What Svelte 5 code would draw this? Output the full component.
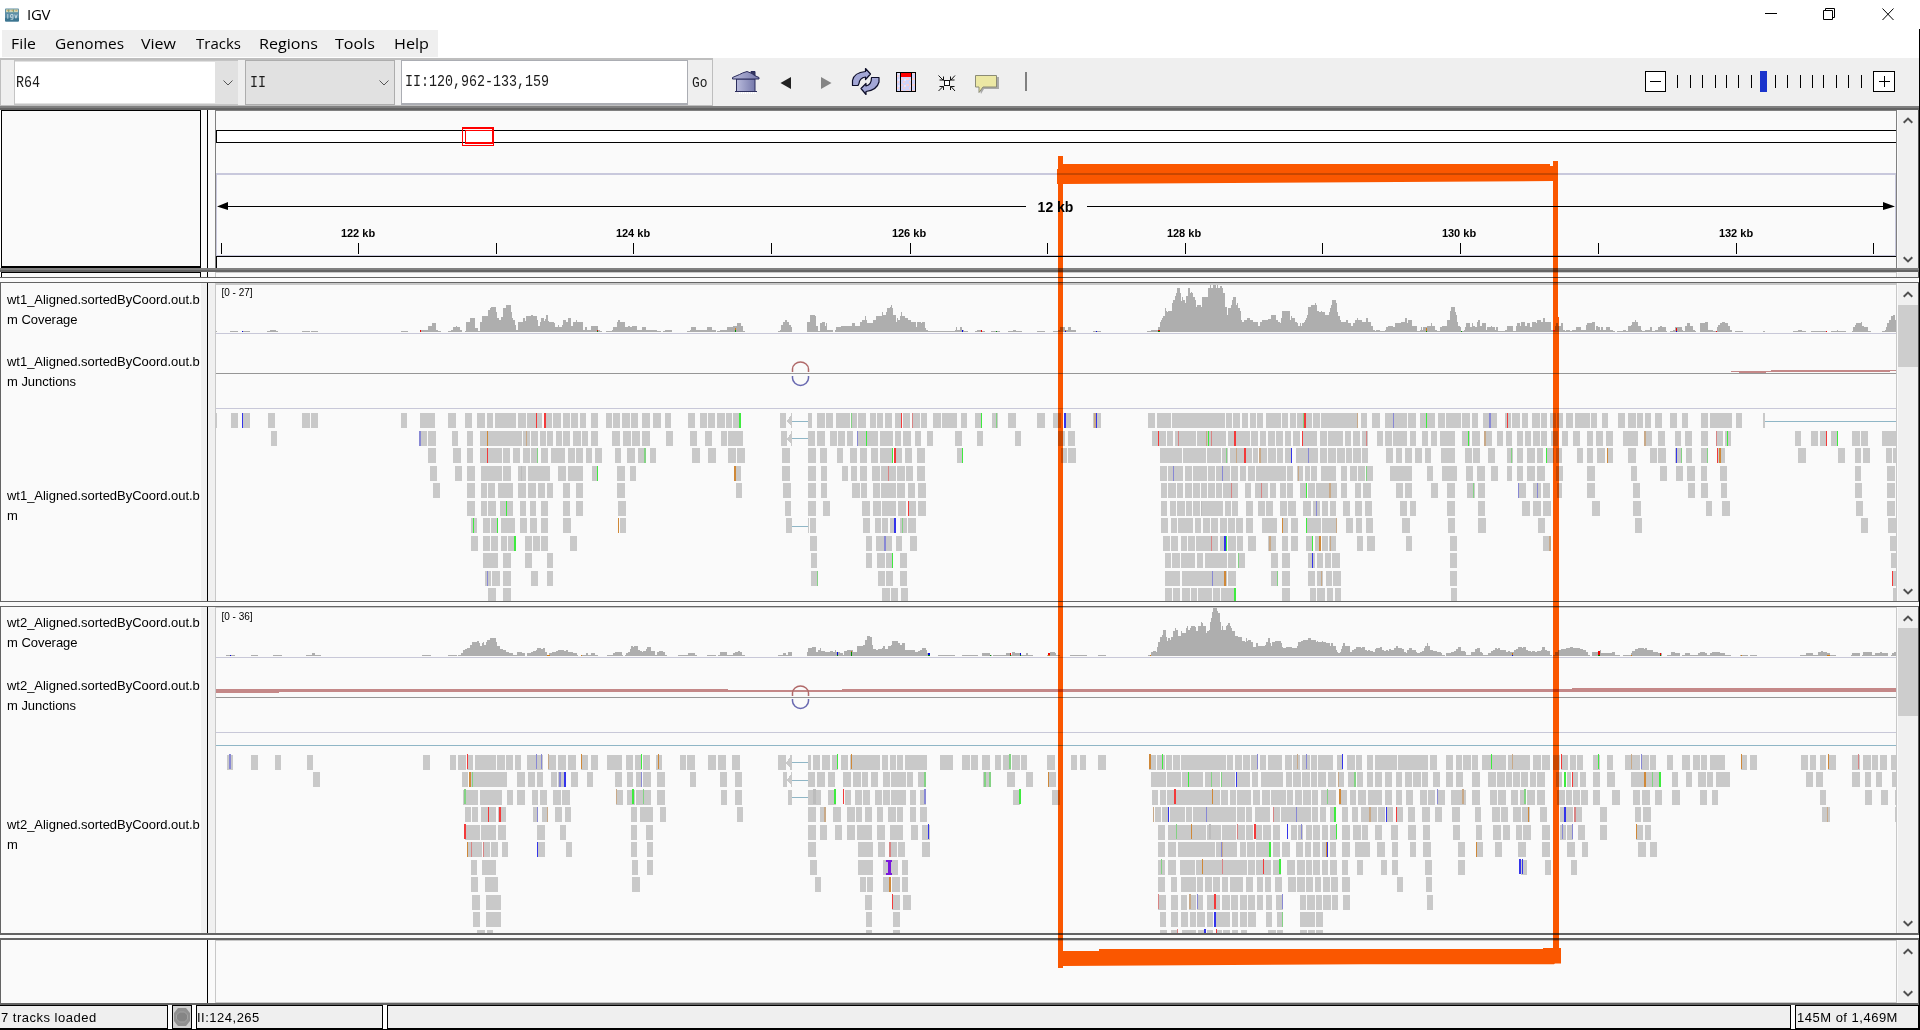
<script>
  // Every chunk of a track lists its spans in its own bins: origin is the chunk's
  // left edge on the panel, scale the number of bins per pixel.
  const CHUNKS = [
    { origin: 0, scale: 2.45 },
    { origin: 600, scale: 2.8 },
    { origin: 1130, scale: 3 },
    { origin: 1500, scale: 3 }
  ];

  const COLOURS = {
    '': '#c9c9c9', k: '#bcbcbc', r: '#f23a3a', R: '#d88484', g: '#3fea3f', G: '#84d284',
    b: '#3434ea', B: '#8888d4', o: '#cf8838', O: '#c8a988', u: '#7a18dc', n: '#0a900a'
  };

  const wt1Reads = [
    `529-532 566-583 595-612 593-595b 657-674 740-759 762-779 982-997 1029-1066 1098-1117 1139-1156 1169-1188 1193-1208 1213-1264 1269-1289 1291-1328 1313-1316r 1338-1352 1333-1338r 1355-1374 1379-1396 1399-1416 1421-1436 1448-1465
664-679 1030-1046 1027-1031B 1049-1068 1107-1122 1144-1159 1176-1279 1193-1196o 1281-1298 1289-1291O 1301-1318 1323-1338 1340-1355 1362-1377 1379-1396 1404-1423 1426-1441 1448-1465
1049-1068 1110-1129 1144-1159 1176-1230 1193-1196r 1232-1249 1257-1274 1281-1298 1301-1318 1316-1318G 1325-1343 1350-1384 1392-1409 1411-1428 1436-1450 1458-1475
1053-1071 1115-1132 1144-1164 1178-1230 1232-1252 1269-1289 1277-1279k 1294-1347 1367-1387 1392-1428 1450-1465 1463-1465g
1061-1078 1144-1164 1178-1193 1196-1213 1220-1257 1269-1289 1294-1313 1318-1335 1340-1355 1379-1396 1411-1428
1144-1164 1178-1193 1196-1215 1225-1257 1240-1242g 1274-1289 1298-1313 1325-1343 1379-1396 1411-1428
1154-1169 1159-1161g 1183-1200 1203-1220 1218-1220g 1227-1262 1274-1291 1298-1316 1325-1343 1379-1399
1154-1171 1183-1200 1203-1220 1227-1242 1245-1260 1259-1264g 1286-1303 1306-1323 1325-1343 1396-1414
1183-1220 1232-1252 1286-1303 1340-1355
1188-1203 1193-1196B 1205-1225 1232-1252 1301-1318 1340-1355
1196-1215 1232-1252`,
    `17-34 36-56 62-84 87-106 118-140 148-171 182-199 246-266 280-300 302-322 328-350 353-370 372-390 389-395g 504-521 523-538< 582-594 608-630 633-652 661-700 703-706G 706-720 722-745 756-773 776-792 798-818 826-846 843-846r 848-868 874-876R 876-896 899-916 932-955 957-1000 1011-1028 1050-1070 1067-1070g 1098-1114 1109-1112G 1142-1165 1224-1246 1268-1290 1303-1319 1299-1305b 1380-1403 1383-1388O 1389-1392b
34-56 64-87 90-112 118-140 185-204 252-272 294-314 339-356 358-400 507-524 524-538< 582-602 608-630 644-664 666-686 692-708 720-722B 722-778 745-748g 784-820 826-843 848-871 882-899 916-932 994-1014 1056-1072 1162-1179 1282-1302 1310-1330
0-6 42-59 76-98 106-129 123-129G 140-157 258-280 302-325 358-381 384-406 510-532 582-605 616-636 664-680 700-720 728-748 759-778 784-820 818-820g 829-846 823-829r 854-874 888-910 1000-1016 1014-1016g 1291-1308 1310-1333
48-70 84-101 381-395 375-381o 510-532 582-605 619-636 678-694 703-720 728-748 762-784 787-829 806-809R 832-854 857-876 888-910
48-70 381-398 512-535 582-605 619-636 706-728 731-748 764-784 787-829 832-854 862-882 890-913
50-73 518-535 582-605 624-644 734-756 764-787 790-829 834-857 862-885 862-865r 890-913
50-53o 56-73 521-538 582-585 587-605 736-756 770-787 790-806 812-823 823-829b 840-860 846-848G 862-885
588-608 745-762 773-818 795-801B 829-846 868-888
591-608 745-762 776-798 801-820 818-820g 840-860
591-610 608-610G 778-798 801-820 840-860
790-812 815-834 843-862`,
    `54-75 81-123 126-285 288-306 309-330 336-354 360-378 381-399 408-453 456-474 480-498 501-546 519-522G 522-528r 549-570 573-684 681-684O 693-711 726-750 765-831 789-792B 834-858 870-915 888-891g 924-945 948-993 996-1020 1026-1044 1059-1101 1077-1083B
66-108 84-87r 111-129 135-198 144-147R 201-288 228-231O 234-237g 243-246R 294-360 312-318r 363-384 390-408 414-435 438-459 465-483 489-510 516-561 516-519r 570-591 594-639 645-663 669-690 696-714 708-711R 741-759 765-786 789-831 840-858 876-894 903-921 930-975 996-1020 1014-1017g 1026-1050 1062-1086 1062-1068O 1101-1119
90-156 159-228 231-273 276-294 288-291G 300-366 318-321O 342-348r 369-384 387-411 387-393O 414-438 441-459 465-486 483-486b 498-564 534-537B 570-591 594-618 621-645 648-666 669-693 696-714 768-789 798-816 825-846 855-876 885-903 933-975 1005-1026 1029-1050 1074-1095
90-111 114-159 129-132B 165-186 189-231 234-255 258-300 276-279B 303-324 330-348 354-375 378-468 471-489 501-519 504-507O 525-540 543-561 573-618 633-651 660-681 684-705 708-729 708-711G 780-846 891-909 936-981 1008-1029 1041-1065 1083-1104
93-111 114-138 141-159 165-186 189-210 213-231 234-255 258-276 279-324 303-306R 345-363 375-414 393-396R 420-438 450-468 471-489 510-531 528-531g 534-555 558-621 597-603O 633-651 675-693 699-723 798-819 825-846 903-924 951-975 1011-1035 1029-1032G 1044-1065
93-111 120-138 141-165 168-186 189-210 213-279 213-216k 285-303 306-324 348-369 384-405 408-429 450-471 474-498 519-543 549-570 558-561B 576-594 600-618 639-660 675-696 705-726 810-831 840-858 951-975 1044-1065
93-114 123-141 144-189 195-213 219-240 243-264 270-291 294-315 318-339 348-369 396-441 456-474 456-459o 483-504 528-573 528-531g 576-621 618-621O 648-669 678-696 708-729 816-840 954-975 1044-1068
99-120 123-144 153-171 174-195 198-264 243-246R 270-291 282-288b 288-291g 294-318 321-339 354-378 414-438 417-423O 456-474 483-504 528-549 546-549g 555-573 567-573o 576-594 597-618 600-603O 681-699 711-735 828-846 960-981
105-123 126-150 153-195 201-219 225-291 294-318 324-345 324-327G 423-444 456-480 534-555 546-549b 561-579 585-603 606-630 960-981
105-150 156-291 246-249B 282-288o 294-318 423-444 441-444G 456-480 534-555 561-579 573-576O 588-606 609-633 960-981
105-126 129-150 156-180 183-201 204-246 249-270 273-315 312-318g 456-480 540-558 561-585 591-609 615-633 963-981`,
    `15-33 21-24r 36-60 66-84 96-120 123-141 150-168 171-189 198-219 225-270 273-291 306-324 354-375 384-408 411-429 435-453 465-486 510-531 546-564 603-624 630-696 708-726 789-795
-6-9 18-36 51-69 75-93 99-120 123-141 153-174 186-204 219-240 261-279 288-309 318-339 369-414 432-456 432-437O 474-495 525-543 555-576 603-624 648-669 648-651R 675-693 681-684g 885-903 933-954 960-981 978-981r 993-1014 1011-1014g 1056-1080 1083-1104 1146-1188
21-39 33-36G 51-69 81-105 111-129 138-162 138-141g 168-186 231-249 261-279 291-315 321-339 321-324o 384-408 450-471 474-498 525-546 528-531b 543-546G 558-576 603-624 621-624G 651-675 651-654r 657-663o 894-918 1014-1035 1065-1083 1089-1110 1158-1176 1179-1188
21-36 51-69 81-105 111-135 168-189 261-285 393-411 480-501 528-549 561-585 603-621 660-681 1065-1083 1161-1185
54-78 54-57B 99-123 111-114B 129-150 171-186 261-285 399-420 564-585 603-624 663-681 1065-1086 1161-1185
66-90 99-123 129-153 276-300 399-423 618-636 666-690 1068-1089 1161-1185
114-135 405-426 1083-1104 1164-1188
129-153 147-153O 1170-1188
1173-1188
1176-1188 1176-1179r
1179-1188`
  ];

  const wt2Reads = [
    `556-571 561-566B 615-632 674-688 752-767 1036-1053 1102-1117 1122-1142 1144-1159 1144-1147r 1164-1215 1218-1237 1240-1257 1262-1276 1291-1330 1313-1316B 1325-1328B 1343-1362 1343-1345O 1367-1387 1392-1411 1423-1441 1423-1426o 1448-1465
767-784 1132-1147 1149-1242 1149-1154o 1156-1159G 1267-1286 1294-1311 1316-1330 1350-1365 1367-1387 1370-1374B 1382-1387b 1399-1416 1438-1453
1134-1171 1137-1142G 1176-1230 1242-1257 1267-1286 1303-1318 1323-1340 1355-1374 1377-1396
1139-1154 1156-1171 1178-1215 1196-1198r 1220-1240 1223-1227r 1306-1318 1316-1318B 1328-1343 1340-1343O 1360-1377 1384-1399
1139-1176 1137-1142r 1178-1215 1220-1240 1316-1335 1372-1387
1144-1181 1144-1147o 1154-1156R 1183-1200 1183-1186R 1203-1220 1230-1245 1316-1335 1316-1318b 1387-1401
1154-1169 1181-1215
1154-1171 1188-1220
1156-1176 1191-1227
1159-1176 1191-1227
1169-1188 1193-1208`,
    `20-62 73-92 98-117 115-118g 120-140 157-174 162-165o 224-241 244-266 302-325 330-353 370-392 498-521 521-538< 582-591 596-616 622-644 650-666 664-666g 675-694 700-784 703-706o 790-806 812-829 832-848 854-916 952-988 1014-1036 1039-1058 1070-1092 1106-1123 1128-1151 1145-1151G 1154-1176 1179-1196 1252-1274 1319-1336 1344-1361 1394-1417
42-62 76-92 101-118 115-118B 120-143 160-182 252-269 336-356 378-398 512-524 524-538< 582-602 608-630 638-658 680-703 708-731 734-750 759-778 792-812 815-857 860-876 890-913 907-913G 1072-1095 1075-1081G 1089-1095G 1140-1162 1193-1212 1255-1277 1254-1257o
45-64 45-48O 76-98 90-95g 101-143 120-123G 160-182 339-356 378-398 526-538 582-619 596-600k 600-604k 638-661 655-661g 680-683r 686-703 714-734 736-756 770-790 792-812 815-857 868-885 896-913 907-913B 1156-1176 1173-1179g 1266-1288
87-104 112-148 168-185 384-400 582-605 616-633 627-633O 652-675 692-714 717-734 742-762 776-792 806-829 832-848 868-885 896-916
87-104 129-148 582-605 616-636 658-678 692-714 720-762 776-798 812-848 871-890 902-924 918-921b
87-104 132-148 582-605 722-764 778-798 809-832 809-815R 834-854 902-924
90-106 132-148 588-608 722-764 792-834 846-862
90-112 602-619 728-745 748-764 792-815 809-815o 818-840 846-862
742-762 818-840 818-820r 848-871
745-762 820-840
745-762 820-840`,
    `57-78 57-63o 81-105 96-99g 108-126 129-150 153-288 291-309 315-336 339-360 363-384 381-384B 390-408 414-456 465-486 489-510 501-504O 516-540 528-531B 543-561 564-609 621-639 636-639b 651-675 678-696 711-729 735-801 804-894 900-921 948-969 978-996 999-1023 1026-1044 1056-1128 1083-1086g
63-108 111-153 156-219 174-177g 225-270 243-246G 273-315 273-276G 321-360 318-321b 366-384 393-459 468-486 489-513 516-540 543-561 564-588 594-618 624-642 624-627O 654-678 672-678G 681-699 711-729 735-756 765-786 798-816 825-846 849-873 876-894 909-930 948-969 978-999 1026-1050 1074-1098 1101-1125
66-84 90-108 111-270 132-138r 246-249o 273-294 300-318 321-363 369-390 396-420 423-468 471-489 495-516 519-543 546-564 573-618 591-594G 627-651 627-633o 660-678 684-708 714-756 765-786 798-816 828-849 870-891 894-915 921-945 921-924B 963-1008 996-1002O 1026-1050 1080-1101 1104-1128
69-72O 75-93 96-117 114-117b 120-165 168-186 189-318 228-231B 321-345 348-366 375-420 429-450 429-432R 453-543 498-501B 546-564 570-588 600-618 612-618g 636-654 666-684 693-741 717-723O 744-765 768-789 768-771b 798-819 798-801r 834-855 876-900 915-936 966-990 1035-1053 1086-1110
84-105 114-228 138-141G 183-186o 231-273 237-243k 276-318 321-345 321-324R 348-369 372-378r 378-396 399-423 429-450 471-474b 483-501 504-519 513-516B 528-546 549-570 576-594 600-621 618-621g 636-660 669-693 696-714 735-756 783-804 834-858 879-900 969-990 1038-1056 1089-1113
84-105 114-138 144-255 258-321 273-276B 276-279O 330-348 351-375 378-423 417-423g 429-450 456-480 498-519 525-543 549-570 576-594 588-591o 591-594b 600-618 636-660 675-720 741-765 786-804 840-858 879-903 984-1005 1038-1059 1038-1041o 1095-1116
84-105 93-96G 114-138 150-195 198-351 216-219o 276-279R 354-375 378-423 399-402r 429-453 447-453g 471-495 501-525 528-546 549-570 576-594 600-621 636-654 681-699 753-771 786-804 885-906 984-1005
84-105 123-141 153-198 201-219 225-246 249-270 276-294 300-339 348-369 381-399 405-423 435-456 474-498 501-525 528-549 555-573 579-600 603-624 636-660 801-819 888-906
84-108 84-87R 123-144 153-171 177-198 177-183O 201-219 201-204B 231-270 252-258r 276-300 303-324 330-351 354-375 381-399 408-426 438-459 456-459B 510-528 531-555 558-576 579-603 606-624 639-660 891-909
90-108 123-144 153-174 180-198 201-225 231-249 252-300 252-258b 306-324 330-351 354-378 408-426 441-459 456-459G 510-555 558-579
90-111 123-141 141-144R 156-198 204-222 222-228b 231-249 258-276 258-261r 279-300 306-324 333-351 414-438 441-459 510-531 534-555 558-579`,
    `-6-18 24-90 36-39O 99-123 126-150 159-180 183-204 183-186r 210-228 231-249 279-300 294-297g 321-339 375-420 393-396O 423-447 423-426B 450-468 501-519 546-570 579-600 603-621 630-675 723-741 723-726o 750-771 903-924 930-948 960-978 984-1008 984-987o 1056-1080 1074-1077R 1089-1113 1116-1134 1140-1161 1173-1188
-6-15 18-36 39-60 63-84 90-108 111-135 168-186 192-198g 201-213 216-234 216-219r 240-258 279-300 321-345 393-483 432-438o 456-459G 477-483g 516-534 558-576 594-618 621-639 648-690 918-939 948-969 1056-1080 1095-1113 1128-1146 1176-1188
-6-18 33-54 60-78 72-78G 81-105 111-135 171-195 198-216 219-240 243-264 279-300 336-360 399-420 426-450 465-486 516-540 600-621 636-654 960-978 1095-1116 1143-1164 1185-1188
3-24 39-63 66-90 84-87o 120-141 180-219 192-198b 222-246 222-228R 300-321 405-423 429-453 966-990 981-984O 1185-1188
-6-3 9-30 48-66 69-93 126-150 180-198 186-189B 201-219 216-219B 234-255 300-321 408-429 408-411o 435-453
-12-6 54-78 126-150 201-225 246-264 414-438 450-471
57-63b 63-81 66-69b 135-153 213-231`
  ];

  // Coverage profiles: "bin top" steps, measured against the chunk's base level.
  const wt1Coverage = [
    '529 183 532 186 563 183 583 186 593 183 612 186 654 183 661 180 676 183 681 186 740 183 759 186 762 183 779 186 982 183 1000 186 1029 180 1049 168 1058 159 1067 180 1072 183 1080 186 1098 183 1105 180 1110 171 1117 168 1120 171 1127 180 1132 186 1139 183 1142 156 1152 144 1164 174 1171 183 1176 156 1181 138 1196 120 1200 114 1204 111 1215 126 1218 144 1222 150 1227 141 1232 114 1240 105 1252 126 1254 144 1258 150 1262 165 1265 180 1269 156 1281 144 1286 153 1289 138 1301 135 1306 138 1316 150 1318 168 1323 156 1325 144 1333 153 1335 147 1338 135 1343 153 1345 156 1357 159 1360 171 1367 165 1370 171 1377 165 1379 150 1387 156 1391 144 1399 168 1404 156 1411 150 1414 156 1428 180 1433 171 1438 180 1448 168 1465 180 1470 183',
    '-10 183 6 186 17 183 34 180 36 171 48 156 50 150 56 156 70 171 78 168 84 171 90 168 104 180 118 171 129 180 148 180 160 183 171 186 176 183 182 180 202 186 244 183 252 180 255 171 269 180 294 180 300 171 314 180 325 186 328 183 336 180 356 171 372 168 384 159 395 168 400 183 406 186 498 183 504 180 507 165 512 156 518 150 524 156 530 165 535 171 538 186 580 156 588 135 602 138 606 168 610 183 616 159 622 156 630 168 633 159 636 180 652 186 658 180 661 171 675 168 700 168 706 159 714 168 726 168 728 156 734 150 742 138 745 150 748 159 764 150 773 138 790 126 792 135 801 126 804 114 812 111 815 105 818 114 820 135 829 156 832 144 834 150 840 138 843 126 846 138 854 144 862 150 871 156 885 171 888 156 899 159 902 156 910 174 913 180 918 183 994 180 997 171 1000 180 1008 171 1014 180 1020 183 1030 186 1050 183 1056 180 1070 183 1078 186 1095 183 1120 186 1142 183 1156 180 1165 183 1182 186 1224 183 1246 186 1268 183 1282 180 1288 171 1302 180 1310 171 1319 180 1333 186 1380 183 1403 186',
    '51 183 63 180 84 171 90 156 93 150 96 144 99 138 105 114 108 123 111 126 114 123 126 99 129 90 135 78 138 69 141 54 150 69 153 93 156 81 159 90 165 99 168 78 174 54 180 69 183 66 186 69 189 81 195 90 198 111 201 105 213 111 216 81 234 54 240 45 243 54 249 45 258 54 261 45 264 54 270 48 276 54 279 69 285 111 291 135 294 114 303 105 306 90 309 81 318 105 321 99 324 114 330 123 333 150 336 156 342 150 351 144 360 150 369 156 384 168 390 156 396 150 414 147 423 135 438 150 444 156 450 159 453 144 456 123 480 150 483 138 486 144 495 156 501 159 504 168 510 159 513 168 516 159 522 156 525 150 528 144 531 135 534 111 543 105 555 99 558 105 561 123 567 126 573 123 576 126 585 135 597 126 600 114 603 105 606 90 618 99 621 126 624 138 630 150 633 156 648 150 654 159 663 168 669 159 675 150 681 144 684 150 696 156 708 144 714 156 723 168 729 180 735 183 738 180 750 183 765 180 768 171 774 168 789 171 795 159 813 156 825 144 831 159 834 150 846 168 861 183 870 180 873 171 876 180 879 171 891 168 903 159 906 168 915 180 921 183 930 171 936 168 951 150 960 123 963 111 975 126 978 135 981 156 984 168 990 171 993 183 1002 180 1005 171 1008 159 1020 171 1026 159 1029 168 1035 171 1041 156 1044 150 1050 168 1056 159 1068 180 1071 171 1083 168 1086 171 1095 180 1098 171 1104 183 1125 180',
    '0 183 15 180 21 168 39 183 48 168 51 159 60 168 63 156 75 168 81 159 90 171 96 156 108 159 111 150 123 156 129 144 135 156 153 180 159 183 165 168 168 159 174 168 183 159 189 180 195 183 198 180 210 183 216 180 228 171 243 180 258 165 261 159 276 156 285 180 288 168 294 171 300 180 303 171 309 180 318 171 330 180 339 183 345 186 351 183 369 180 378 183 384 168 393 165 396 156 405 150 408 156 414 168 423 180 426 183 435 180 450 171 456 183 465 180 474 171 480 168 486 171 498 183 501 186 510 183 519 180 525 171 546 180 549 183 555 168 561 159 570 168 579 180 585 183 588 186 600 159 615 156 624 180 639 183 651 171 654 165 660 159 666 156 675 159 684 168 690 180 696 186 705 183 729 186 789 183 795 186 879 183 894 180 906 183 918 186 933 183 981 186 993 183 1011 180 1014 183 1038 186 1056 183 1059 171 1065 165 1068 159 1083 156 1086 168 1092 171 1104 183 1113 186 1146 183 1155 180 1158 171 1161 159 1167 150 1173 138 1179 135 1185 150 1188 186'
  ];

  const wt2Coverage = [
    '554 180 576 183 615 180 632 183 669 180 691 183 750 180 764 174 772 180 786 183 1034 180 1056 183 1098 180 1120 183 1122 180 1129 174 1134 165 1139 162 1144 159 1152 150 1156 141 1169 138 1173 144 1176 153 1181 144 1183 141 1186 150 1191 141 1193 135 1200 129 1215 141 1218 153 1225 162 1232 165 1240 171 1247 174 1257 180 1267 171 1279 174 1286 183 1291 174 1301 171 1306 168 1313 165 1316 159 1325 162 1330 159 1335 171 1340 180 1345 174 1352 171 1362 168 1367 165 1382 168 1387 165 1392 171 1404 174 1414 180 1416 183 1423 180 1436 174 1441 180 1448 174 1458 180 1465 183',
    '20 180 36 174 42 171 62 180 64 183 70 180 73 174 78 171 84 162 87 153 92 156 95 153 106 165 112 168 118 171 121 168 129 162 132 156 143 168 154 180 160 171 165 168 176 171 182 180 188 183 218 180 246 174 266 180 272 183 300 180 325 183 330 180 336 171 356 180 370 180 372 174 378 171 386 168 392 171 398 180 406 183 498 180 512 174 521 180 526 171 538 183 580 171 582 159 594 156 605 171 610 165 616 159 619 168 630 171 644 168 652 171 658 165 661 171 672 174 680 180 683 168 692 165 708 171 720 153 736 150 742 135 748 123 756 126 762 150 764 162 773 165 778 162 790 159 792 153 798 162 806 153 815 150 818 138 834 144 840 150 846 144 854 165 882 171 890 168 896 165 902 159 913 165 916 174 924 183 946 180 994 183 1014 180 1058 183 1070 174 1092 180 1098 183 1100 180 1126 180 1137 174 1150 180 1154 171 1162 174 1178 180 1193 174 1198 180 1212 183 1252 180 1260 171 1274 174 1277 180 1288 183 1316 180 1364 183 1394 180 1417 183',
    '54 180 63 171 69 168 78 171 81 156 84 141 90 126 96 120 99 105 108 126 111 138 114 129 120 135 123 126 129 108 135 99 138 105 144 123 153 108 156 114 168 99 171 93 174 105 180 99 183 93 195 96 198 108 204 93 213 81 216 84 219 93 228 114 231 108 237 105 240 81 243 69 246 51 249 39 261 48 264 54 270 81 273 105 276 93 279 105 288 93 291 90 294 84 300 93 303 99 306 108 315 123 324 126 336 138 345 141 348 129 351 138 354 135 363 141 369 156 378 144 384 153 405 150 408 141 414 129 420 144 423 153 426 141 435 138 453 144 456 156 459 159 468 156 486 159 501 153 504 141 513 138 519 135 534 129 543 135 558 141 561 138 564 141 576 138 579 141 588 144 600 153 603 144 609 153 618 165 621 171 624 174 630 171 633 162 636 153 639 144 645 153 660 171 666 165 672 162 678 156 693 159 696 156 705 165 711 168 714 165 720 168 729 171 735 162 738 159 750 156 756 165 762 168 768 165 774 168 777 162 783 165 792 159 798 153 804 159 816 162 822 171 828 174 831 165 837 159 846 165 858 171 861 174 870 171 876 168 882 159 885 153 891 144 894 153 900 165 909 168 921 171 933 174 936 180 945 183 948 174 963 171 972 168 978 162 984 156 993 168 1005 171 1008 180 1023 171 1035 162 1041 159 1050 171 1056 174 1059 180 1074 174 1083 168 1089 165 1095 159 1101 162 1104 159 1113 165',
    '0 165 18 171 24 168 30 171 42 165 48 162 54 156 66 159 69 156 78 165 84 168 93 171 96 168 105 171 111 168 123 165 126 156 135 165 141 168 150 180 156 183 159 180 165 171 174 165 183 162 198 159 210 156 219 159 240 162 249 165 258 171 264 180 270 183 276 171 300 165 303 174 336 171 345 180 360 183 369 180 393 174 396 168 405 162 414 159 432 162 435 159 441 165 459 171 474 174 486 183 501 180 513 171 525 174 540 183 546 180 555 174 570 180 594 174 600 171 615 174 621 180 630 174 636 171 660 174 675 180 693 183 720 180 744 183 750 180 771 183 900 180 918 174 939 180 954 171 963 168 969 171 981 174 990 180 1008 183 1053 180 1056 174 1080 183 1086 180 1089 171 1116 180 1125 174 1140 171 1146 174 1164 183 1173 180 1176 174 1182 171 1188 183'
  ];

  // Mismatch marks on the coverage bars: x, y, width, height, colour.
  const red = '#f00000', blue = '#0000e0', green = '#008a00', amber = '#d07a10';
  const wt1Marks = [
    [242, 331, 1, 1, blue], [420, 330, 1, 2, red], [597, 330, 1, 1, red], [597, 331, 1, 1, green],
    [735, 328, 1, 2, amber], [735, 330, 1, 2, green], [962, 330, 1, 2, blue], [981, 330, 1, 2, red],
    [996, 331, 1, 1, green], [1065, 331, 1, 1, blue], [1065, 330, 1, 1, amber], [1096, 331, 1, 1, blue],
    [1158, 330, 2, 1, red], [1158, 331, 2, 1, green], [1426, 328, 1, 3, amber], [1426, 331, 1, 1, green],
    [1461, 331, 1, 1, green], [1553, 330, 2, 1, red], [1676, 328, 1, 3, red], [1676, 331, 1, 1, blue],
    [1716, 331, 1, 1, red], [1826, 331, 1, 1, red]
  ];
  const wt2Marks = [
    [230, 655, 1, 1, blue], [547, 655, 3, 1, amber], [581, 655, 1, 1, amber], [837, 652, 1, 3, blue],
    [837, 655, 1, 1, green], [851, 651, 1, 1, amber], [851, 652, 1, 4, green], [928, 653, 2, 2, blue],
    [928, 655, 2, 1, green], [990, 655, 1, 1, green], [1010, 653, 1, 2, red], [1010, 655, 1, 1, green],
    [1020, 653, 1, 2, blue], [1020, 655, 1, 1, green], [1048, 653, 2, 2, red], [1048, 655, 2, 1, amber],
    [1150, 655, 1, 1, amber], [1512, 653, 1, 2, amber], [1512, 655, 1, 1, blue], [1598, 651, 2, 4, red],
    [1598, 655, 2, 1, green], [1631, 655, 1, 1, amber], [1660, 653, 1, 2, red], [1660, 655, 1, 1, green],
    [1741, 655, 1, 1, amber], [1827, 655, 3, 1, amber]
  ];

  function parseReads(chunks, tops, lift) {
    const out = [];
    chunks.forEach((text, i) => {
      const { origin, scale } = CHUNKS[i];
      text.split('\n').forEach((line, row) => {
        for (const token of line.trim().split(/\s+/)) {
          const m = token.match(/^(-?\d+)-(-?\d+)(.?)$/);
          if (!m) continue;
          const x = Math.round(origin + m[1] / scale);
          const w = Math.max(1, Math.round(origin + m[2] / scale) - x);
          const kind = m[3];
          const y = tops[row] - (kind && kind !== '<' ? lift[row] : 0);
          out.push({ x, y, w, kind });
        }
      });
    });
    return out;
  }

  function coveragePath(chunks, base, bottom) {
    let d = '';
    chunks.forEach((text, i) => {
      const { origin, scale } = CHUNKS[i];
      const limit = i < 3 ? CHUNKS[i + 1].origin : 1896;
      const n = text.split(' ').map(Number);
      for (let k = 0; k < n.length; k += 2) {
        const h = Math.round((base - n[k + 1]) / 3);
        if (h <= 0) continue;
        const x0 = Math.max(origin, Math.round(origin + n[k] / scale));
        const x1 = k + 2 < n.length ? Math.min(limit, Math.round(origin + n[k + 2] / scale)) : limit;
        if (x1 > x0) d += `M${x0} ${bottom}V${bottom - h}H${x1}V${bottom}Z`;
      }
    });
    return d;
  }

  const none = Array(11).fill(0);
  const tracks = [
    {
      id: 'wt1', top: 283, height: 318, range: '[0 - 27]', rangeY: 296, covLine: 333, mid: 373, split: 408,
      cover: coveragePath(wt1Coverage, 186, 332), marks: wt1Marks,
      reads: parseReads(wt1Reads, [413, 431, 448, 466, 483, 501, 518, 536, 553, 571, 588], none),
      skips: [[792, 421, 16], [792, 438, 16], [792, 526, 16], [1765, 421, 131]],
      junctions: [[1731, 371, 40, 1], [1739, 372, 27, 1], [1771, 370, 119, 2], [1883, 370, 13, 1]],
      arc: 373, dip: 1, thumb: [22, 62], edge: 2
    },
    {
      id: 'wt2', top: 607, height: 326, range: '[0 - 36]', rangeY: 620, covLine: 657, mid: 697, split: 732,
      cover: coveragePath(wt2Coverage, 183, 656), marks: wt2Marks,
      reads: parseReads(wt2Reads, [755, 772, 790, 807, 825, 842, 860, 877, 895, 912, 930], [1, 0, 1, 0, 1, 0, 1, 0, 1, 0, 1]),
      skips: [[216, 745, 1680], [792, 762, 16], [792, 780, 16], [792, 797, 16]],
      junctions: [[216, 689, 63, 4], [279, 689, 449, 3], [728, 690, 114, 2], [842, 689, 730, 3], [1572, 688, 324, 4]],
      arc: 697, dip: 0, thumb: [21, 88], edge: 1
    }
  ];

  const ticks = [221, 358, 496, 633, 771, 910, 1047, 1185, 1322, 1460, 1598, 1736, 1873];
  const kb = [['122 kb', 358], ['124 kb', 633], ['126 kb', 909], ['128 kb', 1184], ['130 kb', 1459], ['132 kb', 1736]];
  const zoomTicks = [1677, 1690, 1702, 1715, 1726, 1738, 1751, 1775, 1787, 1800, 1812, 1823, 1836, 1848, 1861];
  const menu = [['File', 44, 25], ['Genomes', 86, 69], ['View', 55, 35], ['Tracks', 63, 45], ['Regions', 76, 59], ['Tools', 59, 40], ['Help', 44, 35]];
</script>

{#snippet chevron(dir)}
  <svg class="chev" width="10" height="7" viewBox="0 0 10 7">
    <path d={dir === 'up' ? 'M.7 5.8 5 1.6 9.3 5.8' : 'M.7 1.2 5 5.4 9.3 1.2'} />
  </svg>
{/snippet}

{#snippet scroller(thumb)}
  <div class="scroll">
    {@render chevron('up')}
    {#if thumb}<div class="thumb" style="top:{thumb[0]}px;height:{thumb[1]}px"></div>{/if}
    {@render chevron('down')}
  </div>
{/snippet}

<div class="app">
  <header class="title">
    <svg class="logo" width="14" height="14" viewBox="0 0 15 14">
      <rect width="15" height="14" rx="1" fill="#5d8ea6" />
      <rect y="10" width="15" height="4" rx="1" fill="#3c7590" />
      <path d="M1 1h13v3H1z" fill="#cfd3b4" />
      <path d="M2 2h3M7 2h2M11 2h2" stroke="#d9a45c" />
      <path d="M4 1v3M9 1v3" stroke="#6b9a76" />
      <path d="M3 6v5M6 6.500h2.500v5H6M6 7v2.500h2M10.500 6.500l1.200 4 1.300-4" fill="none" stroke="#d5e4ea" stroke-width=".9" />
    </svg>
    <span class="app-name">IGV</span>
    <svg class="controls" width="130" height="13" viewBox="1765 8 130 13" fill="none" stroke="#000">
      <path d="M1765 13.500h12M1823.500 10.500h9v9h-9zM1825.500 10v-1.500h9v9H1833M1882.500 8.500l11 11.500M1893.500 8.500l-11 11.500" />
    </svg>
  </header>

  <div class="body">
    <nav class="menu">
      {#each menu as [name, w, tw]}
        <span style="width:{w}px"><svg width={tw} height="27"><text x="0" y="18.500" textLength={tw} lengthAdjust="spacingAndGlyphs">{name}</text></svg></span>
      {/each}
    </nav>

    <div class="toolbar">
      <div class="fields">
        <div class="combo genome"><div class="input"><span class="mono">R64</span></div><svg width="10" height="6" viewBox="0 0 10 6"><path d="M.5.5 5 5 9.500.5" /></svg></div>
        <div class="combo chrom"><span class="mono">II</span><svg width="10" height="6" viewBox="0 0 10 6"><path d="M.5.5 5 5 9.500.5" /></svg></div>
        <div class="locus"><span class="mono">II:120,962-133,159</span></div>
        <div class="go"><span class="mono">Go</span></div>
      </div>
      <svg class="icons" width="300" height="48" viewBox="730 58 300 48">
        <defs>
          <linearGradient id="home" x1="0" x2="1"><stop offset="0" stop-color="#b9bbdc" /><stop offset="1" stop-color="#7679ab" /></linearGradient>
          <pattern id="heat" width="6" height="6" patternUnits="userSpaceOnUse">
            <rect width="6" height="6" fill="#cfd4fa" /><path d="M0 1h3M3 4h2" stroke="#f6cfd2" stroke-width="2" /><path d="M4 2h2" stroke="#f5f5ff" />
          </pattern>
        </defs>
        <g stroke="#2b2d5c" fill="url(#home)">
          <path d="M736.500 79h18.500v12.500h-18.500z" />
          <path d="M735 91.500h22" />
          <path d="M751 71.500h4v5h-4z" fill="#34365f" />
          <path d="M732.500 79v-1.500l7-3 3-1.500 4.500-1.500 5 2 2.500 2 4.500 2v1.500z" />
        </g>
        <path d="M739 93h17" stroke="#fff" stroke-dasharray="1 1" stroke-width="2" />
        <path d="M780.500 83 791 77v12z" fill="#222" />
        <path d="M831.500 83 821 77v12z" fill="#858585" />
        <g fill="#a3a7d6" stroke="#0c0d28" stroke-width="1.200" stroke-linejoin="round">
          <path d="M852.500 85.500v-5q1.500-8 13-9v-3l5 5.500-5 5.500v-2.500q-6 1-6.500 6.500l-1 2z" />
          <path d="M871.500 77.500h7.500v4.500q-2 8-13 9.500v3l-5-6 5-5v2.500q5.500-1 5.500-8.500z" />
        </g>
        <g>
          <rect x="896.500" y="72.500" width="19" height="19" fill="url(#heat)" stroke="#000" />
          <path d="M900.500 73v18M911.500 73v18" stroke="#000" />
          <path d="M901 73h10v4h-10z" fill="#f00" />
        </g>
        <g fill="none" stroke="#111">
          <rect x="944.500" y="80.500" width="5" height="5" fill="#fff" />
          <path d="M938.500 75.500l5 5M943.500 76.500v3.500H939.500M955 75.500l-4.500 5M950.500 76.500v3.500h4M938.500 91l5-5M943.500 90v-3.500H939.500M955 91l-4.500-5M950.500 90v-3.500h4" />
        </g>
        <path d="M977 77h22v12h-15l-3 5z" fill="#a9a9a9" />
        <path d="M975.500 75.500h21v11.500h-13.500l-4 5.500v-5.500h-3.500z" fill="#ece8a4" stroke="#8b8b76" />
        <path d="M1026 72v19" stroke="#808080" stroke-width="2" />
      </svg>
      <svg class="zoom" width="256" height="48" viewBox="1642 58 256 48" shape-rendering="crispEdges">
        <g fill="#fff" stroke="#000">
          <rect x="1645.500" y="71.500" width="20" height="20" />
          <rect x="1873.500" y="71.500" width="21" height="20" />
          <path d="M1650 81.500h11M1879 81.500h11M1884.500 76v11" />
          {#each zoomTicks as x}<path d="M{x + 0.5} 75v13" />{/each}
        </g>
        <rect x="1760" y="71" width="7" height="21" fill="#1a34cc" />
      </svg>
    </div>
    <div class="bar double"></div>

    <section class="row head">
      <div class="names framed"></div><div class="gut"></div><div class="vline"></div><div class="gut"></div>
      <div class="data">
        <svg width="1680" height="158" viewBox="216 110 1680 158" shape-rendering="crispEdges">
          <rect x="216" y="130.500" width="1690" height="12" fill="#fff" stroke="#000" transform="translate(.5 0)" />
          <g fill="none" stroke="#f00">
            <rect x="462.500" y="127.500" width="31" height="18" />
            <rect x="465.500" y="130.500" width="27" height="13" />
            <path d="M463 128.500h30M492 128v15M466 142.500h26" />
          </g>
          <path d="M216 110.500h1680" stroke="#808080" />
          <path d="M216 174h1680" stroke="#c8c8dc" stroke-width="2" />
          <path d="M216.500 173v83M1895.500 173v83M216 255.500h1680" stroke="#c8c8dc" fill="none" />
          <path d="M222 206.500h804M1087 206.500h802M216.500 268v-11.500H1896" stroke="#000" fill="none" />
          <path d="M217 206.500 228 202v8zM1895 206.500 1883 202v8z" shape-rendering="auto" />
          {#each ticks as x}<path d="M{x + 0.5} 243v11" stroke="#000" />{/each}
          {#each kb as [label, x]}<text class="kb" {x} y="237">{label}</text>{/each}
          <text class="span" x="1055.500" y="212">12 kb</text>
        </svg>
      </div>
      <div class="gap"></div>{@render scroller(null)}<div class="edge"></div>
    </section>
    <div class="bar double"></div>
    <section class="row strip">
      <div class="names framed"></div><div class="gut"></div><div class="vline"></div><div class="gut"></div>
      <div class="data light"></div><div class="gap"></div><div class="scroll"></div><div class="edge"></div>
    </section>
    <div class="bar splitter"></div>

    {#each tracks as t}
      <section class="row track {t.id}" style="height:{t.height}px">
        <div class="names">
          <p class="coverage">{t.id}_Aligned.sortedByCoord.out.b<br />m Coverage</p>
          <p class="junction">{t.id}_Aligned.sortedByCoord.out.b<br />m Junctions</p>
          <p class="align">{t.id}_Aligned.sortedByCoord.out.b<br />m</p>
        </div>
        <div class="gut grey"></div><div class="vline"></div><div class="gut grey"></div>
        <div class="data light">
          <svg width="1680" height={t.height} viewBox="216 {t.top} 1680 {t.height}" shape-rendering="crispEdges">
            <rect x="216" y={t.top} width="1680" height={t.edge} fill="#c8c8c8" />
            <path d={t.cover} fill="#aeaeae" />
            {#each t.marks as [x, y, w, h, fill]}<rect {x} {y} width={w} height={h} {fill} />{/each}
            <text class="range" x="221.500" y={t.rangeY}>{t.range}</text>
            <rect x="216" y={t.covLine} width="1680" height="1" fill="#c8c8d8" />
            <rect x="216" y={t.mid} width="1680" height="1" fill="#969696" />
            <rect x="216" y={t.split} width="1680" height="1" fill="#c8c8d8" />
            {#each t.junctions as [x, y, w, h]}<rect {x} {y} width={w} height={h} fill="#c48888" />{/each}
            <g fill="none" stroke-width="1.500" shape-rendering="auto">
              <path d="M792.500 {t.arc - 1}v-3c0-4 4-7 8-7s8 3 8 7v3" stroke="#b06868" />
              <path d="M792.500 {t.arc + 2 + t.dip}v2c0 4 4 7.500 8 7.500s8-3.500 8-7.500v-2" stroke="#6868b0" />
            </g>
            {#each t.skips as [x, y, w]}<rect {x} {y} width={w} height="1" fill="#8fb6c6" />{/each}
            {#each t.reads as r}
              {#if r.kind === '<'}
                <path d="M{r.x} {r.y + 8}l4-6v-2h{r.w - 4}v15h{4 - r.w}v-2z" fill="#c9c9c9" />
              {:else}
                <rect x={r.x} y={r.y} width={r.w} height="15" fill={COLOURS[r.kind]} />
              {/if}
            {/each}
            {#if t.id === 'wt2'}
              <path d="M886 860h6v2h-1.500v11h1.500v2h-6v-2h1.500v-11h-1.500z" fill="#7a18dc" />
              <rect x="888" y="860" width="3" height="15" fill="#7a18dc" />
            {/if}
          </svg>
        </div>
        <div class="gap"></div>{@render scroller(t.thumb)}<div class="edge"></div>
      </section>
      <div class="bar {t.id === 'wt1' ? 'splitter' : 'splitter thick'}"></div>
    {/each}

    <section class="row foot">
      <div class="names"></div><div class="gut"></div><div class="vline"></div><div class="gut"></div>
      <div class="data light boxed"></div><div class="gap"></div>{@render scroller(null)}<div class="edge"></div>
    </section>
    <div class="bar solid"></div>

    <footer class="status">
      <div class="cell c1">7 tracks loaded</div>
      <div class="cell c2">
        <svg width="18" height="20" viewBox="0 0 18 20"><path d="M5 1h8l4 5v8l-4 5H5l-4-5V6z" fill="#909090" /><path d="M6.500 5h5l3 3v4l-3 3h-5l-3-3V8z" fill="#858585" stroke="#a2a2a2" /></svg>
      </div>
      <div class="cell c3">II:124,265</div>
      <div class="cell c4"></div>
      <div class="cell c5">145M of 1,469M</div>
    </footer>
  </div>

  <!-- Highlighter box drawn over the region of interest -->
  <svg class="marker" width="1920" height="1030" viewBox="0 0 1920 1030">
    <path fill-rule="evenodd" d="M1058 156h5v8H1550v2h3v-5h5v156h1v631h2v15.500h-6l-1 .7H1364l-301 1.800v2h-5V184h-1v-15h1zM1063 184V951h36v-2h444v-1h10V181z" />
  </svg>
</div>

<style>
  :global(body) { margin: 0; background: #fff; overflow: hidden; }
  .app { position: relative; width: 1920px; height: 1030px; display: flex; flex-direction: column; font-family: "Liberation Sans", Arial, sans-serif; color: #000; background: #fff; isolation: isolate; }
  .title { height: 29px; display: flex; align-items: center; box-sizing: border-box; padding: 0 25px 0 5px; }
  .app-name { font: 15px "Open Sans", sans-serif; margin: -2px 0 0 8px; letter-spacing: -0.3px; }
  .controls { margin-left: auto; }
  .body { flex: 1; display: flex; flex-direction: column; box-sizing: border-box; border-right: 1px solid #000; border-bottom: 1px solid #000; padding-top: 1px; }
  .menu { display: flex; width: 427px; height: 27px; margin: 0 0 1px 2px; padding-left: 9px; background: #efefef; font: 15px "Open Sans", sans-serif; }
  .menu span { flex: none; }
  .menu svg { display: block; overflow: visible; }
  .toolbar { height: 48px; background: #efefef; display: flex; align-items: center; }
  .fields { width: 713px; height: 48px; box-sizing: border-box; border: 1px solid #bebebe; border-top-width: 2px; display: flex; align-items: flex-start; padding-left: 13px; }
  .combo { box-sizing: border-box; height: 45px; background: #e1e1e1; border: 1px solid #adadad; display: flex; align-items: center; }
  .combo svg { fill: none; stroke: #555; margin-left: auto; }
  .genome { width: 224px; border-right: 0; border-color: #c4c4c4; padding-right: 5px; margin-right: 7px; }
  .genome .input { width: 200px; height: 41px; background: #fff; display: flex; align-items: center; padding-left: 1px; box-sizing: border-box; }
  .chrom { width: 150px; padding: 0 5px 0 4px; margin-right: 6px; }
  .locus { width: 287px; height: 45px; box-sizing: border-box; background: #fff; border: 1px solid #abadb3; border-bottom-width: 2px; padding-left: 3px; display: flex; align-items: center; }
  .go { height: 45px; display: flex; align-items: center; padding-left: 4px; font-size: 14px; }
  .mono { font-family: "Liberation Mono", monospace; font-size: 16px; color: #1c1c1c; transform: scaleX(0.833); transform-origin: left center; white-space: nowrap; display: block; line-height: 20px; }
  .go .mono { font-size: 15.500px; width: 16px; }
  .icons { margin-left: 17px; }
  .zoom { margin-left: auto; margin-right: 21px; }
  .bar { flex: none; box-sizing: border-box; }
  .double { height: 4px; background: #646464; border-top: 2px solid #808080; }
  .splitter { height: 6px; background: #fafafa; border: 1px solid #646464; border-width: 1px 0; }
  .thick { height: 7px; border-width: 2px 0; }
  .solid { height: 2px; background: #646464; }
  .row { display: grid; grid-template-columns: 201px 6px 1px 7px 1682px 1px 20px 1px; flex: none; overflow: hidden; }
  .names { box-sizing: border-box; border-left: 1px solid #646464; background: #fafafa; overflow: hidden; padding-left: 6px; }
  .names p { margin: 0; font-size: 13px; line-height: 20px; letter-spacing: -0.03px; white-space: nowrap; }
  .framed { border: 1px solid #000; border-bottom-width: 2px; margin-left: 1px; }
  .strip .framed { border-bottom: 0; }
  .gut { background: #fafafa; }
  .grey { background: #f0f0f0; }
  .vline { background: #000; }
  .data { box-sizing: border-box; background: #fafafa; border-left: 1px solid #808080; border-right: 1px solid #808080; }
  .data svg { display: block; }
  .light { border-color: #c8c8c8; }
  .strip .light { border-top: 1px solid #c8c8c8; }
  .boxed { border: 1px solid #c8c8c8; }
  .gap { background: #fafafa; }
  .edge { background: #555; }
  .scroll { position: relative; background: #f0f0f0; display: flex; flex-direction: column; justify-content: space-between; align-items: center; padding: 8px 0 6px; box-sizing: border-box; }
  .head .scroll { padding: 7px 0 5px; }
  .strip .scroll { padding: 0; }
  .chev { fill: none; stroke: #505050; stroke-width: 2; }
  .thumb { position: absolute; left: 0; width: 20px; background: #cdcdcd; }
  .head { height: 158px; }
  .strip { height: 5px; }
  .foot { height: 63px; }
  .coverage { padding-top: 7px; height: 56px; }
  .junction { padding-top: 6px; height: 51px; }
  .track .align { padding-top: 83px; }
  .wt2 .coverage { padding-top: 6px; }
  .wt2 .junction { padding-top: 7px; }
  .wt2 .align { padding-top: 88px; }
  .kb { font-size: 11px; font-weight: bold; text-anchor: middle; }
  .span { font-size: 14px; font-weight: bold; text-anchor: middle; }
  .range { font-size: 10px; }
  .status { height: 24px; display: flex; gap: 4px; background: #fff; }
  .cell { box-sizing: border-box; border: 1px solid #000; background: #efefef; font-size: 13px; line-height: 23px; letter-spacing: 0.500px; white-space: nowrap; }
  .c1 { width: 168px; border-left: 0; padding-left: 1px; }
  .c2 { width: 20px; background: #d2d2d2; display: flex; align-items: center; }
  .c3 { width: 187px; }
  .c4 { width: 1404px; }
  .c5 { flex: 1; padding-left: 1px; }
  .marker { position: absolute; left: 0; top: 0; mix-blend-mode: multiply; pointer-events: none; }
  .marker path { fill: #ff5900; }
</style>
